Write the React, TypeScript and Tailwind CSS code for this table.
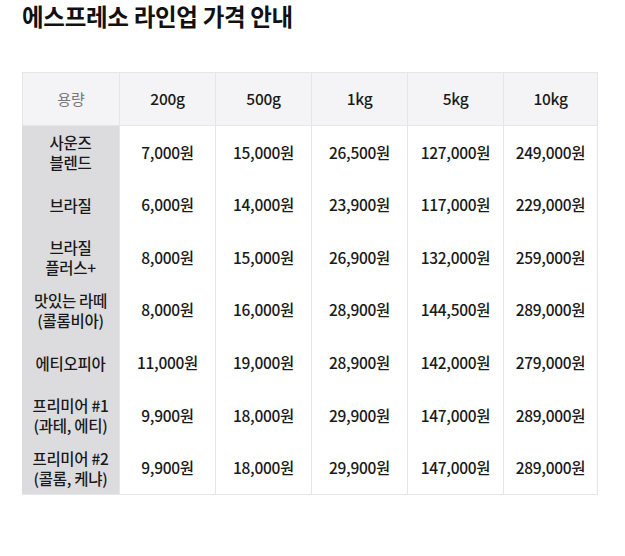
const sizes = ["200g", "500g", "1kg", "5kg", "10kg"];

const rows: { name: string[]; prices: string[] }[] = [
  { name: ["사운즈", "블렌드"], prices: ["7,000원", "15,000원", "26,500원", "127,000원", "249,000원"] },
  { name: ["브라질"], prices: ["6,000원", "14,000원", "23,900원", "117,000원", "229,000원"] },
  { name: ["브라질", "플러스+"], prices: ["8,000원", "15,000원", "26,900원", "132,000원", "259,000원"] },
  { name: ["맛있는 라떼", "(콜롬비아)"], prices: ["8,000원", "16,000원", "28,900원", "144,500원", "289,000원"] },
  { name: ["에티오피아"], prices: ["11,000원", "19,000원", "28,900원", "142,000원", "279,000원"] },
  { name: ["프리미어 #1", "(과테, 에티)"], prices: ["9,900원", "18,000원", "29,900원", "147,000원", "289,000원"] },
  { name: ["프리미어 #2", "(콜롬, 케냐)"], prices: ["9,900원", "18,000원", "29,900원", "147,000원", "289,000원"] },
];

export default function App() {
  return (
    <div
      className="min-h-screen bg-white px-[22px] pt-[2px] text-[#1a1a1a]"
      style={{ fontFamily: '"Noto Sans CJK KR", "Noto Sans", sans-serif' }}
    >
      <h1 className="text-[23.5px] font-bold leading-[29px] tracking-[-0.3px] text-[#111]">
        에스프레소 라인업 가격 안내
      </h1>

      <div className="mt-[41px] w-[576px] border-t border-r border-b border-[#e6e6e8]">
        <div className="grid grid-cols-[97px_96px_96px_96px_96px_94px] border-b border-[#e6e6e8] bg-[#f4f4f6]">
          <div className="flex h-[52px] items-center justify-center border-l border-[#e6e6e8] text-[15px] text-[#777]">
            용량
          </div>
          {sizes.map((s) => (
            <div
              key={s}
              className="flex h-[52px] items-center justify-center border-l border-[#e6e6e8] text-[15.5px] font-medium tracking-[-0.3px]"
            >
              {s}
            </div>
          ))}
        </div>

        {rows.map((r, i) => (
          <div key={i} className="grid h-[52.6px] grid-cols-[97px_96px_96px_96px_96px_94px]">
            <div className="flex flex-col items-center justify-center bg-[#dcdcdf] text-[15.5px] font-medium leading-[20px] tracking-[-0.3px]">
              {r.name.map((n) => (
                <span key={n}>{n}</span>
              ))}
            </div>
            {r.prices.map((p, j) => (
              <div
                key={j}
                className="flex items-center justify-center border-l border-[#e6e6e8] text-[15.5px] font-medium tracking-[-0.3px]"
              >
                {p}
              </div>
            ))}
          </div>
        ))}
      </div>
    </div>
  );
}
